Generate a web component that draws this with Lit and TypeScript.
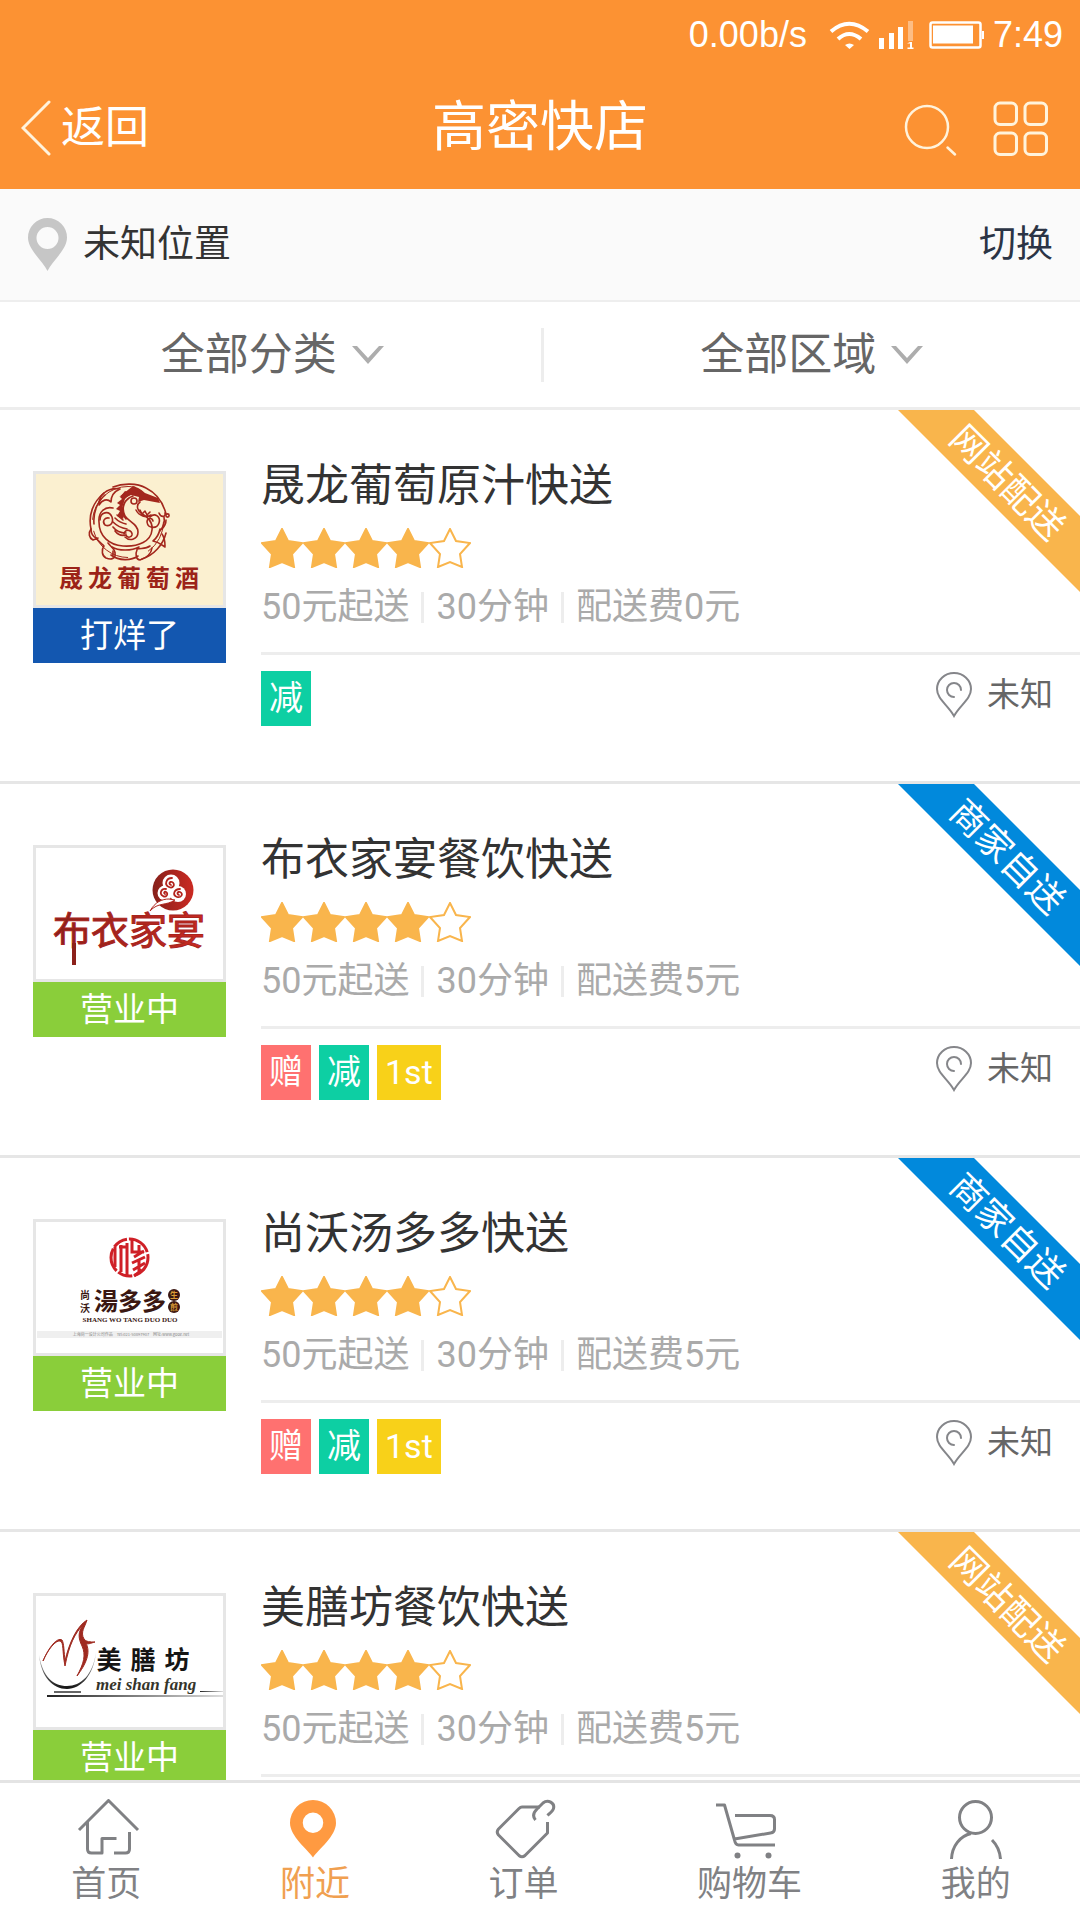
import { LitElement, html, svg, css, nothing } from "lit";
import { customElement, property, state } from "lit/decorators.js";
import { classMap } from "lit/directives/class-map.js";

type Tag = "gift" | "cut" | "first";

interface Shop {
  name: string;
  logo: "dragon" | "cloud" | "seal" | "swan";
  open: boolean;
  fee: number;
  selfDelivery: boolean;
  tags: Tag[];
  distance?: string;
}

const SHOPS: Shop[] = [
  { name: "晟龙葡萄原汁快送", logo: "dragon", open: false, fee: 0, selfDelivery: false, tags: ["cut"], distance: "未知" },
  { name: "布衣家宴餐饮快送", logo: "cloud", open: true, fee: 5, selfDelivery: true, tags: ["gift", "cut", "first"], distance: "未知" },
  { name: "尚沃汤多多快送", logo: "seal", open: true, fee: 5, selfDelivery: true, tags: ["gift", "cut", "first"], distance: "未知" },
  { name: "美膳坊餐饮快送", logo: "swan", open: true, fee: 5, selfDelivery: false, tags: [] },
];

const TAG_TEXT: Record<Tag, string> = { gift: "赠", cut: "减", first: "1st" };

const spread = (chars: string, x: number, y: number, step: number, size: number, fill: string) =>
  [...chars].map(
    (c, i) => svg`<text x=${x + i * step} y=${y} font-size=${size} font-weight="700" text-anchor="middle" fill=${fill}>${c}</text>`
  );

const LOGOS = {
  dragon: svg`
    <rect width="193" height="137" fill="#fbf0d0"/>
    <g fill="none" stroke="#a3271d" stroke-width="1.6" stroke-linecap="round" stroke-linejoin="round">
      <path d="M71 22C60 31 55 44 58 58c0 4 1 7 5 9M61 53C60 42 64 31 72 24M80 16c10-4 24-4 33 1 10 5 17 14 20 26M133 62c-3 12-12 22-24 26"/>
      <path d="M71 22c5-4 10-5 16-4-7 3-9 7-9 13-4-4-9-2-12 3 0-5 1-9 5-12z"/>
      <path d="M58 58c-3 4-2 9 2 11l5-2M63 67c3 4 6 6 8 8-3 4-2 10 2 12 5 2 10 1 9-5 0-4-4-6-7-10"/>
      <path d="M79 76c6 4 20 4 27 0M78 84c8 6 20 6 27 1M80 80v6M104 78c5-1 9 0 13-3M104 79c-2 4-1 10 3 10 6-2 11-5 12-12"/>
      <path d="M120 70c6 1 9 4 12 6M127 60c4-5 5-9 4-14M132 75c0-5-1-9-3-12M127 58c-1 5-3 9-7 12"/>
      <path d="M80 37c-8-2-15 4-14 14 0 14 10 23 24 24 16 1 28-5 29-16 1-9-5-13-11-17-4-3-5-8-1-11"/>
      <path d="M100 25c-9 3-12 12-8 20 4 6 13 8 13 16 0 7-8 10-13 5M96 27c-8 6-8 15-3 21"/>
      <path d="M91 63c1-6 9-4 8 1-1 3-5 3-6 0M76 47c-5-1-7 4-4 7 5 2 9-2 7-8-3-7-12-5-12 3"/>
      <path d="M80 56c3 4 8 6 13 6M80 51c4 4 8 6 14 7M82 47c3 3 6 5 11 6M82 60c3 4 7 5 11 4M84 44l6 5"/>
      <path d="M117 46c5-5 11 0 9 6-2 6-11 6-12-1 0-4 5-5 6-1M103 39c3 6 10 8 15 5M107 39l2 4 3-3 2 4 3-3M126 42c2 5 7 4 6 0M129 58c2-2 4-5 4-9"/>
      <circle cx="101" cy="30" r="3"/><circle cx="134.500" cy="44.500" r="1.600"/><circle cx="95" cy="51" r="35.500" stroke-width="1" stroke-dasharray="34 22 46 12 60 50"/>
    </g>
    <path d="M100 15c6 2 9 4 12 7l13 5 2 5-16-3-6 2 1-5-8-2-6 3 3-5-9 4z" fill="#a3271d"/>
    <path d="M92 20l-5 6 2 2-5 4 3 2-4 4 4 2-3 5 6 3 1-3-2-8 3-9 6-6z" fill="#a3271d"/>
    ${spread("晟龙葡萄酒", 38, 116, 29, 24, "#9c2318")}`,
  cloud: svg`
    <defs><linearGradient id="redfade"><stop offset="0" stop-color="#86201a"/><stop offset="1" stop-color="#cb2a22"/></linearGradient></defs>
    <circle cx="140" cy="45" r="20.500" fill="url(#redfade)"/>
    <g fill="#fff"><circle cx="138" cy="38" r="8.500"/><circle cx="132" cy="48" r="7.500"/><circle cx="145" cy="49" r="8"/></g>
    <path d="M142 55c-9 6-17 2-25 11 5-9 12-12 19-12z" fill="#fff" stroke="#b0261e" stroke-width="1"/>
    <g fill="none" stroke="#b3241d" stroke-width="1.800" stroke-linecap="round">
      <path d="M138 40c-3-1-1-4 1-3 4 2 1 7-3 5-5-2-3-9 3-9"/>
      <path d="M132 49c-2-1 0-3 1-2 3 2 0 6-3 4-4-2-2-8 3-7"/>
      <path d="M146 50c-3-1-1-4 1-3 4 2 1 6-3 5-5-2-3-8 3-8"/>
    </g>
    <text x="20" y="99" font-size="38" fill="url(#redfade)" stroke="#a8241d" stroke-width="1">布衣家宴</text>
    <rect x="39" y="98" width="4" height="22" fill="#8c211b"/>`,
  seal: svg`
    <g fill="none" stroke="#cf2027" stroke-width="3">
      <circle cx="96.500" cy="38.500" r="18.500" stroke-dasharray="24 2 15 2"/>
      <path d="M82 28v20M88 26v27M94 24v34M86 28h8M99 21v12h12M101 38l10-6M99 44l13-6M100 51l12-7M101 57l8-6M106 26v10M106 40v14"/>
    </g>
    ${spread("尚", 52, 80, 0, 10, "#3a1712")}
    ${spread("沃", 52, 93, 0, 10, "#3a1712")}
    ${spread("湯多多", 73, 91, 24, 24, "#3a1712")}
    <circle cx="141" cy="76" r="6" fill="#3a1712"/><circle cx="141" cy="88" r="6" fill="#3a1712"/>
    ${spread("生", 141, 79, 0, 8, "#d99a35")}
    ${spread("煎", 141, 91, 0, 8, "#d99a35")}
    <text class="roman" x="97" y="103" font-size="7" font-weight="700" text-anchor="middle" fill="#3a1712">SHANG WO TANG DUO DUO</text>
    <rect x="4" y="112" width="185" height="7" fill="#efefef"/>
    <text x="98" y="117" font-size="4" text-anchor="middle" fill="#888">上海尚一设计公司作品　Tel:021-50897907　网址:www.gooe.net</text>`,
  swan: svg`
    <defs>
      <linearGradient id="bowl" x2="0" y2="1"><stop offset="0" stop-color="#ccc"/><stop offset="1" stop-color="#111"/></linearGradient>
      <linearGradient id="bar"><stop offset="0" stop-color="#222"/><stop offset="1" stop-color="#ddd"/></linearGradient>
    </defs>
    <path d="M10 68C16 54 24 44 29 47c2 3 2 12 3 21C36 50 44 33 54 27c-2 7-7 12-3 19 2 3 6 3 11 3-4 1-8 3-9 1 5 10 0 21-9 33 7-13 9-21 5-30-4-8-4-14 1-21-8 8-14 20-18 41-3-15-1-24-5-25-4-1-12 8-17 20z" fill="#9f2a20" stroke="#9f2a20" stroke-width="1"/>
    <path d="M6 62C8 84 20 96 34 96s27-14 29-37C60 82 48 93 34 93S10 84 6 62z" fill="url(#bowl)"/>
    <rect x="21" y="98" width="27" height="2" fill="#666"/>
    <rect x="14" y="102" width="176" height="2" fill="url(#bar)"/>
    <rect x="167" y="98" width="23" height="1" fill="url(#bar)"/>
    ${spread("美膳坊", 76, 76, 34, 25, "#151515")}
    <text class="roman" x="63" y="97" font-size="17" font-weight="700" font-style="italic" fill="#35342a">mei shan fang</text>`,
};

const STAR = "21,1 27,13 41,15 31,26 33,39 21,34 9,39 11,26 1,15 15,13";

@customElement("shop-card")
export class ShopCard extends LitElement {
  @property({ attribute: false }) shop!: Shop;

  static styles = css`
    :host { display: block; border-bottom: 3px solid #e6e6e6; background: #fff; }
    .card { position: relative; display: flex; align-items: flex-start; gap: 35px; padding: 50px 0 55px 33px; color: inherit; text-decoration: none; }
    .thumb { flex: none; width: 193px; margin-top: 11px; display: flex; flex-direction: column; }
    .frame { box-sizing: border-box; border: 3px solid #e6e6e6; height: 137px; overflow: hidden; display: flex; align-items: center; justify-content: center; }
    .frame svg { flex: none; width: 193px; height: 137px; font-family: "Noto Sans CJK SC", sans-serif; }
    .roman { font-family: "Liberation Serif", serif; }
    .status { background: #8ace3a; color: #fff; font-size: 33px; line-height: 55px; text-align: center; }
    .closed { background: #1357b0; }
    .info { flex: 1; min-width: 0; }
    .name { margin: 0; font-size: 44px; font-weight: 400; line-height: 52px; color: #333; }
    .stars { display: flex; margin-top: 16px; }
    .stars svg { width: 42px; height: 40px; fill: #f9b54c; stroke: #f9b54c; stroke-width: 2; }
    .stars .empty { fill: none; }
    .meta { display: flex; align-items: center; margin-top: 15px; padding-bottom: 21px; border-bottom: 3px solid #ededed; font-size: 36px; line-height: 48px; color: #aaa; }
    .meta span + span { display: flex; align-items: center; }
    .meta span + span::before { content: ""; width: 3px; height: 31px; margin: 0 12px; background: #ededed; }
    .foot { display: flex; justify-content: space-between; align-items: flex-start; padding: 16px 27px 0 0; }
    .tags { display: flex; gap: 8px; }
    .tag { padding: 0 8px; font-size: 34px; line-height: 55px; color: #fff; }
    .gift { background: #ff7170; }
    .cut { background: #0dcfa3; }
    .first { background: #f8d119; }
    .where { display: flex; align-items: center; gap: 15px; font-size: 33px; line-height: 48px; color: #666; }
    .where svg { width: 36px; height: 46px; }
    .ribbon { position: absolute; top: 0; right: 0; box-sizing: border-box; width: 182px; height: 182px; padding: 0 0 36px 36px; display: grid; place-items: center; background: #f9b54c; clip-path: polygon(0 0, 76px 0, 182px 106px, 182px 182px); color: #fff; font-size: 36px; line-height: 48px; white-space: nowrap; }
    .ribbon span { transform: rotate(45deg); }
    .self { background: #0189dc; }
  `;

  render() {
    const s = this.shop;
    if (!s) return nothing;
    return html`
      <a class="card" href="#shop">
        <div class="thumb">
          <div class="frame"><svg viewBox="0 0 193 137" aria-hidden="true">${LOGOS[s.logo]}</svg></div>
          <div class=${classMap({ status: true, closed: !s.open })}>${s.open ? "营业中" : "打烊了"}</div>
        </div>
        <div class="info">
          <h2 class="name">${s.name}</h2>
          <div class="stars">
            ${[0, 1, 2, 3, 4].map((i) => html`<svg class=${i < 4 ? "full" : "empty"} viewBox="0 0 42 40"><polygon points=${STAR} /></svg>`)}
          </div>
          <div class="meta"><span>50元起送</span><span>30分钟</span><span>配送费${s.fee}元</span></div>
          <div class="foot">
            <div class="tags">${s.tags.map((t) => html`<span class="tag ${t}">${TAG_TEXT[t]}</span>`)}</div>
            ${s.distance
              ? html`<div class="where">
                  <svg viewBox="0 0 36 46" fill="none" stroke="#85868a" stroke-width="2" stroke-linecap="round">
                    <path d="M18 44C12 33 1 27 1 17a17 16 0 0 1 34 0c0 10-11 16-17 27z" />
                    <path d="M18 25a7 7 0 1 1 7-7" />
                  </svg>
                  <span>${s.distance}</span>
                </div>`
              : nothing}
          </div>
        </div>
        <div class=${classMap({ ribbon: true, self: s.selfDelivery })}><span>${s.selfDelivery ? "商家自送" : "网站配送"}</span></div>
      </a>
    `;
  }
}

const TABS = [
  { label: "首页", icon: svg`<path d="M9 31L38.500 1.500 68 31M17.500 23V50q0 4 4 4H32V39.500H46.500M59.500 33V50q0 4-4 4H44"/>` },
  { label: "附近", icon: svg`<path fill="#ff9a41" stroke="none" fill-rule="evenodd" d="M34 58.500C28 50 11 37 11 24a23 23 0 0 1 46 0C57 37 40 50 34 58.500zM34 13.500a10 10 0 1 0 0 20.500 10 10 0 1 0 0-20.500z"/>` },
  { label: "订单", icon: svg`<path d="M53 8H35q-1.500 0-3 1.500L11.500 30q-2.500 3 0 6L32 56.500q3 2.500 6 0L60.500 34V23"/><path d="M48.500 21C45 17 47 13 50 10L56 4C61 0 68 4 66.500 9.500 66 12 63 14 60.500 16.500"/>` },
  { label: "购物车", icon: svg`<path d="M2 6H10.500L20.500 41q1 5 4 5H61M21 16.500H56q4.500 0 4.500 4V30q0 3.500-4 4L20.500 40"/><circle cx="23.500" cy="56.500" r="3" fill="#808184" stroke="none"/><circle cx="54.500" cy="56.500" r="3" fill="#808184" stroke="none"/>` },
  { label: "我的", icon: svg`<circle cx="35.500" cy="18.500" r="16"/><path d="M11.500 60C12 47 20 37 31 34.500M52 41C57 46 60 53 60.500 60"/>` },
];

@customElement("app-root")
export class AppRoot extends LitElement {
  @state() private tab = 1;

  static styles = css`
    :host { display: flex; flex-direction: column; height: 100vh; overflow: hidden; background: #fff; font-family: Roboto, "Noto Sans CJK SC", sans-serif; }
    svg { display: block; }
    button { margin: 0; padding: 0; border: 0; background: none; font: inherit; color: inherit; cursor: pointer; }
    .top { flex: none; background: #fc9233; color: #fff; }
    .system { display: flex; justify-content: flex-end; align-items: center; padding: 15px 17px 0 0; font-family: "Liberation Sans", sans-serif; font-size: 36px; line-height: 40px; }
    .system svg { width: 156px; height: 30px; margin: 0 8px 0 22px; }
    .bar { display: grid; grid-template-columns: 1fr auto 1fr; align-items: center; height: 134px; padding: 12px 21px 0; box-sizing: border-box; }
    .back { display: flex; align-items: center; gap: 10px; justify-self: start; font-size: 44px; line-height: 60px; }
    .back svg { width: 30px; height: 56px; }
    .title { margin: 0; font-size: 54px; font-weight: 400; line-height: 70px; }
    .tools { display: flex; align-items: center; gap: 36px; justify-self: end; padding: 2px 10px 0 0; }
    .tools svg { width: 56px; height: 56px; }
    .place { flex: none; display: flex; align-items: center; justify-content: space-between; height: 113px; box-sizing: border-box; padding: 0 27px 0 28px; background: #fafafa; border-bottom: 2px solid #eee; font-size: 37px; line-height: 48px; color: #333; }
    .here { display: flex; align-items: center; gap: 16px; }
    .here svg { width: 39px; height: 53px; }
    .switch { color: #2b3445; }
    .filters { flex: none; display: flex; align-items: center; height: 108px; box-sizing: border-box; padding-left: 4px; border-bottom: 3px solid #ededed; }
    .filter { flex: 1; display: flex; align-items: center; justify-content: center; gap: 15px; font-size: 44px; line-height: 60px; color: #666; }
    .filter svg { width: 32px; height: 18px; }
    .rule { width: 3px; height: 54px; background: #ededed; }
    .list { flex: 1; min-height: 0; overflow: hidden; margin: 0; padding: 0; list-style: none; }
    .tabs { flex: none; display: flex; justify-content: space-around; height: 140px; box-sizing: border-box; padding: 16px 0 0 2px; border-top: 3px solid #e4e4e4; background: #fff; }
    .tab { display: flex; flex-direction: column; align-items: center; color: #808184; font-size: 35px; line-height: 52px; text-decoration: none; }
    .tab svg { width: 72px; height: 60px; margin: 0 -1px; fill: none; stroke: #808184; stroke-width: 3; }
    .active { color: #f0a050; }
  `;

  render() {
    return html`
      <header class="top">
        <div class="system">
          <span>0.00b/s</span>
          <svg viewBox="0 0 156 30" fill="#fff" aria-hidden="true">
            <g fill="none" stroke="#fff" stroke-width="4"><path d="M2 11.500Q20 -4 39 11.500M9 19Q20 9 32 19"/></g>
            <path d="M16 25q4.500-3 9 0l-4.500 4z"/>
            <path d="M50 18h5v11h-5zM60 13h5v16h-5zM69 7h5v22h-5z"/>
            <path opacity=".4" d="M79 1h5v20h-5z"/>
            <path d="M78 23.500l3-1.500h2v5.500h1.500V29H78.500v-1.500H81v-4h-3z"/>
            <rect x="101.500" y="2.500" width="50" height="25" rx="2" fill="none" stroke="#fff" stroke-width="2.500"/>
            <path d="M104 5.500h40v18h-40zM153 11h2v8h-2z"/>
          </svg>
          <span>7:49</span>
        </div>
        <div class="bar">
          <button class="back">
            <svg viewBox="0 0 30 56" fill="none" stroke="#fff3dc" stroke-width="3" stroke-linecap="round"><path d="M28 2L2 28l26 26" /></svg>
            <span>返回</span>
          </button>
          <h1 class="title">高密快店</h1>
          <div class="tools">
            <button aria-label="搜索">
              <svg viewBox="0 0 56 56" fill="none" stroke="#fff3dc" stroke-width="2.500" stroke-linecap="round"><circle cx="26" cy="26" r="21" /><path d="M46.500 46.500l7.500 7" /></svg>
            </button>
            <button aria-label="菜单">
              <svg viewBox="0 0 56 56" fill="none" stroke="#fff3dc" stroke-width="3">
                <rect x="2" y="2" width="21.500" height="21.500" rx="5" /><rect x="32" y="2" width="21.500" height="21.500" rx="5" />
                <rect x="2" y="32" width="21.500" height="21.500" rx="5" /><rect x="32" y="32" width="21.500" height="21.500" rx="5" />
              </svg>
            </button>
          </div>
        </div>
      </header>
      <section class="place">
        <div class="here">
          <svg viewBox="0 0 39 53" fill="#c6c6c6"><path fill-rule="evenodd" d="M19.500 53C15 43 0 32 0 19.500a19.500 19.500 0 0 1 39 0C39 32 24 43 19.500 53zM19.500 9a11 11 0 1 0 0 22 11 11 0 1 0 0-22z" /></svg>
          <span>未知位置</span>
        </div>
        <button class="switch">切换</button>
      </section>
      <nav class="filters">
        ${["全部分类", "全部区域"].map(
          (label, i) => html`
            ${i ? html`<div class="rule"></div>` : nothing}
            <button class="filter">
              <span>${label}</span>
              <svg viewBox="0 0 32 18" fill="#adadad"><path d="M0 0h5l11 12L27 0h5L16 18z" /></svg>
            </button>
          `
        )}
      </nav>
      <ul class="list">
        ${SHOPS.map((s) => html`<li><shop-card .shop=${s}></shop-card></li>`)}
      </ul>
      <nav class="tabs">
        ${TABS.map(
          (t, i) => html`
            <a class=${classMap({ tab: true, active: i === this.tab })} href="#tab" @click=${() => (this.tab = i)}>
              <svg viewBox="0 0 72 60" stroke-linejoin="round">${t.icon}</svg>
              <span>${t.label}</span>
            </a>
          `
        )}
      </nav>
    `;
  }
}
